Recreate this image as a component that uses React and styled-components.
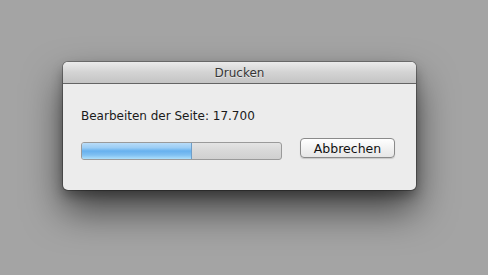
import React from "react";
import styled, { createGlobalStyle } from "styled-components";

const GlobalStyle = createGlobalStyle`
  html, body {
    margin: 0;
    padding: 0;
    background: #a4a4a4;
  }
  body {
    font-family: "DejaVu Sans", "Liberation Sans", sans-serif;
  }
`;

const Desktop = styled.div`
  width: 488px;
  height: 275px;
  box-sizing: border-box;
  padding: 62px 0 0 63px;
  background: #a4a4a4;
  overflow: hidden;
`;

const Sheet = styled.div`
  width: 353px;
  height: 128px;
  display: flex;
  flex-direction: column;
  background: #ececec;
  border-radius: 5px;
  overflow: hidden;
  box-shadow: 0 0 0 1px rgba(0, 0, 0, 0.28), 0 20px 38px rgba(0, 0, 0, 0.6),
    0 6px 12px rgba(0, 0, 0, 0.3);
`;

const TitleBar = styled.div`
  height: 21px;
  flex: none;
  display: flex;
  align-items: center;
  justify-content: center;
  background: linear-gradient(#ebebeb, #d3d3d3 50%, #c4c4c4);
  border-bottom: 1px solid #646464;
  font-size: 12px;
  color: #363636;
  text-shadow: 0 1px 0 rgba(255, 255, 255, 0.5);
`;

const Body = styled.div`
  flex: 1;
  padding: 25px 18px 0 18px;
  display: flex;
  flex-direction: column;
`;

const Status = styled.div`
  font-size: 12px;
  color: #1a1a1a;
  height: 15px;
  line-height: 15px;
`;

const Row = styled.div`
  margin-top: 14px;
  display: flex;
  align-items: flex-start;
  gap: 18px;
`;

const Track = styled.div`
  width: 201px;
  height: 18px;
  box-sizing: border-box;
  border: 1px solid #9a9a9a;
  border-radius: 3px;
  background: linear-gradient(#e4e4e4, #d8d8d8 50%, #d0d0d0);
  overflow: hidden;
  margin-top: 4px;
`;

const Fill = styled.div`
  height: 100%;
  background: linear-gradient(
    #b9dcf8,
    #9bcdf5 30%,
    #67b1ee 50%,
    #7fc0f2 75%,
    #aee0fb
  );
  border-right: 1px solid #6f9ec8;
`;

const Button = styled.button`
  width: 95px;
  height: 20px;
  box-sizing: border-box;
  border: 1px solid #8a8a8a;
  border-radius: 4px;
  background: linear-gradient(#ffffff, #f2f2f2 50%, #e6e6e6);
  box-shadow: 0 1px 1px rgba(0, 0, 0, 0.15);
  font-family: "DejaVu Sans", "Liberation Sans", sans-serif;
  font-size: 12.5px;
  color: #111;
  padding: 0;
`;

export default function App() {
  const progress = 0.55;
  return (
    <>
      <GlobalStyle />
      <Desktop>
        <Sheet>
          <TitleBar>Drucken</TitleBar>
          <Body>
            <Status>Bearbeiten der Seite: 17.700</Status>
            <Row>
              <Track>
                <Fill style={{ width: `${progress * 100}%` }} />
              </Track>
              <Button>Abbrechen</Button>
            </Row>
          </Body>
        </Sheet>
      </Desktop>
    </>
  );
}
